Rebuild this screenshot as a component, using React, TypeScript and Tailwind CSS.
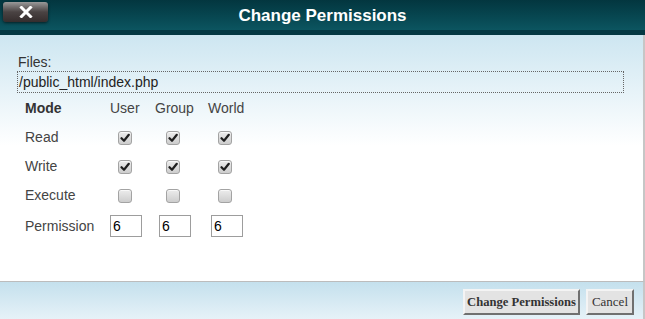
import React from "react";

const Check = ({ checked }: { checked: boolean }) => (
  <span className="relative inline-flex h-[14px] w-[14px] items-center justify-center rounded-[3px] border border-[#a3a3a3] bg-gradient-to-b from-[#ececec] to-[#cdcdcd] shadow-[inset_0_1px_0_#f8f8f8]">
    {checked && (
      <svg width="10" height="10" viewBox="0 0 10 10">
        <path d="M1.5 5.2 L4 7.8 L8.8 1.8" fill="none" stroke="#1f1f1f" strokeWidth="2.2" strokeLinecap="round" strokeLinejoin="round" />
      </svg>
    )}
  </span>
);

const Num = () => (
  <div className="flex h-[22px] w-[32px] items-center border border-[#9d9d9d] bg-white pl-[2px] text-[14px] text-black">6</div>
);

export default function App() {
  const rows: { label: string; checked: boolean }[] = [
    { label: "Read", checked: true },
    { label: "Write", checked: true },
    { label: "Execute", checked: false },
  ];
  return (
    <div className="flex h-[319px] w-[645px] flex-col overflow-hidden bg-white text-[#333]" style={{ fontFamily: '"Liberation Sans", Arial, sans-serif' }}>
      {/* Header */}
      <div className="relative flex h-[35px] shrink-0 items-start justify-center border-b-[5px] border-[#043843] bg-gradient-to-b from-[#03363f] to-[#0c5560]">
        <div className="absolute left-[3px] top-[2px] flex h-[20px] w-[45px] items-center justify-center rounded-[3px] bg-gradient-to-b from-[#9a9a9a] via-[#4a4343] to-[#352d2d] shadow-[0_1px_3px_rgba(0,0,0,0.6)]">
          <svg width="14" height="12" viewBox="0 0 14 12">
            <path d="M2.5 1.5 L11.5 10.5 M11.5 1.5 L2.5 10.5" stroke="#fff" strokeWidth="3" strokeLinecap="square" />
          </svg>
        </div>
        <div className="pt-[6px] text-[17px] font-bold leading-[20px] text-white">Change Permissions</div>
      </div>

      {/* Body */}
      <div className="flex flex-1 flex-col border-r-2 border-[#c6c6c6] bg-gradient-to-b from-[#cde6f1] via-white via-[45%] to-white">
        <div className="px-[17px] pt-[19px]">
          <div className="pl-[1px] text-[14px] leading-[16px] text-[#333]">Files:</div>
          <div className="mt-[1px] flex h-[22px] w-[607px] items-center border border-dotted border-[#666] pl-[1px] text-[14px] text-[#222]">/public_html/index.php</div>
        </div>

        <div className="ml-[25px] mt-[1px] grid grid-cols-[85px_45px_53px_60px] text-[14px]">
          <div className="flex h-[29px] items-center font-bold text-[#333]">Mode</div>
          <div className="flex h-[29px] items-center text-[#444]">User</div>
          <div className="flex h-[29px] items-center text-[#444]">Group</div>
          <div className="flex h-[29px] items-center text-[#444]">World</div>
          {rows.map((r) => (
            <React.Fragment key={r.label}>
              <div className="flex h-[29px] items-center text-[#444]">{r.label}</div>
              <div className="flex h-[29px] items-center pl-[8px]"><Check checked={r.checked} /></div>
              <div className="flex h-[29px] items-center pl-[11px]"><Check checked={r.checked} /></div>
              <div className="flex h-[29px] items-center pl-[10px]"><Check checked={r.checked} /></div>
            </React.Fragment>
          ))}
          <div className="flex h-[32px] items-center text-[#444]">Permission</div>
          <div className="flex h-[32px] items-center"><Num /></div>
          <div className="flex h-[32px] items-center pl-[4px]"><Num /></div>
          <div className="flex h-[32px] items-center pl-[3px]"><Num /></div>
        </div>
      </div>

      {/* Footer */}
      <div className="flex h-[38px] shrink-0 items-start justify-end gap-[6px] border-r-2 border-t border-[#c6c6c6] border-t-[#bcbcbc] bg-gradient-to-b from-[#c4e0ed] to-[#e6f2f8] pr-[9px] pt-[7px]" style={{ fontFamily: '"Liberation Serif", "Times New Roman", serif' }}>
        <button className="h-[26px] border-2 border-[#f4f4f4] border-b-[#707070] border-r-[#707070] bg-[#e3e3e3] px-[2px] text-[12.6px] font-bold text-[#333]">Change Permissions</button>
        <button className="h-[26px] border-2 border-[#f4f4f4] border-b-[#707070] border-r-[#707070] bg-[#e3e3e3] px-[4px] text-[13px] text-[#333]">Cancel</button>
      </div>
    </div>
  );
}
